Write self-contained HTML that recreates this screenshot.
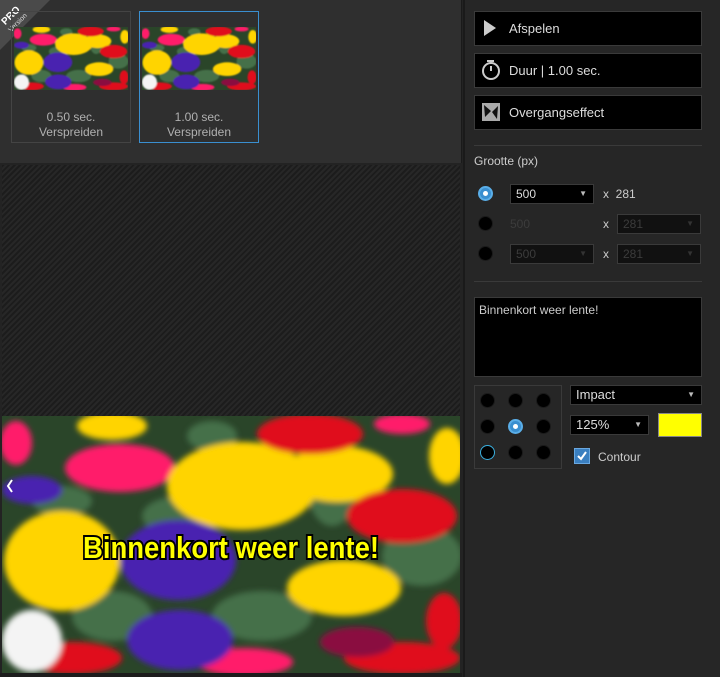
<!DOCTYPE html>
<html><head><meta charset="utf-8"><style>
*{margin:0;padding:0;box-sizing:border-box}
body{width:720px;height:677px;background:#232323;font-family:"Liberation Sans",sans-serif;position:relative;overflow:hidden;color:#ccc}
.abs{position:absolute}
.top{left:0;top:0;width:462px;height:163px;background:#2f2f2f;border-right:1px solid #1a1a1a}
.stripes{left:2px;top:165px;width:458px;height:251px;background:repeating-linear-gradient(135deg,#1c1c1c 0 2px,#272727 2px 4px)}
.thumb{top:11px;width:120px;height:132px;border:1px solid #444;text-align:center;font-size:12px;color:#b0b0b0;line-height:15px}
.thumb svg{position:absolute;left:2px;top:15px;width:114px;height:63px}
.thumb .t{position:absolute;left:0;right:0;top:98px}
.right{left:463px;top:0;width:257px;height:677px;background:#262626;border-left:2px solid #1a1a1a}
.btn{left:474px;width:228px;height:35px;background:#000;border:1px solid #3a3a3a;font-size:13px;color:#ddd;line-height:33px;padding-left:34px}
.sep{left:474px;width:228px;height:1px;background:#3a3a3a}
.rad{width:15px;height:15px;border-radius:50%;background:#000;border:1px solid #1a1a1a}
.sel{background:#000;border:1px solid #3a3a3a;font-size:12px;color:#ddd;line-height:18px;padding-left:5px}
.sel.dis{color:#3c3c3c;background:#111}
.arr{position:absolute;right:6px;top:0;font-size:8px;color:#bbb}
.dis .arr{color:#333}
.lbl{font-size:12px;color:#ccc}
</style></head><body>
<svg width="0" height="0" style="position:absolute">
<defs>
<filter id="bl"><feGaussianBlur stdDeviation="3"/></filter>
<symbol id="fl" viewBox="0 0 458 257" preserveAspectRatio="none">
<rect width="458" height="257" fill="#2a4529"/>
<g filter="url(#bl)">
<g fill="#45704a">
<ellipse cx="180" cy="100" rx="40" ry="20"/><ellipse cx="110" cy="200" rx="40" ry="25"/><ellipse cx="260" cy="200" rx="50" ry="25"/><ellipse cx="420" cy="140" rx="40" ry="30"/><ellipse cx="330" cy="70" rx="25" ry="40"/><ellipse cx="60" cy="85" rx="30" ry="15"/><ellipse cx="210" cy="20" rx="25" ry="15"/></g>
<g fill="#ff1f6a"><ellipse cx="14" cy="27" rx="16" ry="22"/><ellipse cx="118" cy="52" rx="55" ry="24"/><ellipse cx="400" cy="8" rx="28" ry="10"/><ellipse cx="243" cy="246" rx="48" ry="14"/></g>
<g fill="#ffd400"><ellipse cx="110" cy="10" rx="35" ry="14"/><ellipse cx="240" cy="70" rx="75" ry="44"/><ellipse cx="336" cy="58" rx="55" ry="28"/><ellipse cx="445" cy="40" rx="18" ry="28"/><ellipse cx="60" cy="145" rx="58" ry="50"/><ellipse cx="342" cy="172" rx="57" ry="28"/></g>
<g fill="#e0101c"><ellipse cx="308" cy="18" rx="53" ry="20"/><ellipse cx="400" cy="100" rx="55" ry="27"/><ellipse cx="70" cy="242" rx="50" ry="16"/><ellipse cx="400" cy="242" rx="58" ry="16"/><ellipse cx="442" cy="205" rx="18" ry="28"/></g>
<g fill="#4a22b0"><ellipse cx="30" cy="74" rx="30" ry="14"/><ellipse cx="176" cy="144" rx="58" ry="40"/><ellipse cx="178" cy="224" rx="53" ry="30"/></g>
<ellipse cx="30" cy="225" rx="30" ry="31" fill="#f4f4f4"/>
<ellipse cx="355" cy="226" rx="37" ry="15" fill="#8a1040"/>
</g>
</symbol>
</defs></svg>

<div class="abs top"></div>
<div class="abs" style="left:0;top:0;width:0;height:0;border-top:50px solid #4a4a4a;border-right:50px solid transparent"></div>
<div class="abs" style="left:3px;top:10px;transform:rotate(-45deg);font-size:10px;font-weight:bold;color:#fff;line-height:9px;text-align:center">PRO<br><span style="font-size:7px;font-weight:normal;color:#ddd">Version</span></div>
<div class="abs thumb" style="left:11px"><svg><use href="#fl"/></svg><div class="t">0.50 sec.<br>Verspreiden</div></div>
<div class="abs thumb" style="left:139px;border-color:#3a8fd0"><svg><use href="#fl"/></svg><div class="t">1.00 sec.<br>Verspreiden</div></div>
<div class="abs stripes"></div>
<svg class="abs" style="left:2px;top:416px" width="458" height="257"><use href="#fl"/>
<text x="229" y="142" text-anchor="middle" font-family="Liberation Sans Narrow, Liberation Sans, sans-serif" font-weight="bold" font-size="31" fill="#ffff00" stroke="#000" stroke-width="4" paint-order="stroke" textLength="296" lengthAdjust="spacingAndGlyphs">Binnenkort weer lente!</text>
<path d="M10 64 L6 70 L10 76" stroke="#fff" stroke-width="2" fill="none"/></svg>
<div class="abs" style="left:0;top:673px;width:462px;height:4px;background:#1c1c1c"></div>

<div class="abs right"></div>
<div class="abs btn" style="top:11px">Afspelen</div>
<svg class="abs" style="left:483px;top:19px" width="14" height="18"><path d="M1 1 L13 9 L1 17Z" fill="#ccc"/></svg>
<div class="abs btn" style="top:53px">Duur | 1.00 sec.</div>
<svg class="abs" style="left:481px;top:59px" width="20" height="22"><rect x="6" y="1" width="7" height="2" fill="#ccc"/><circle cx="10" cy="12" r="8" stroke="#ccc" stroke-width="2" fill="none"/><path d="M10 12 V7" stroke="#ccc" stroke-width="2"/></svg>
<div class="abs btn" style="top:95px">Overgangseffect</div>
<svg class="abs" style="left:482px;top:103px" width="18" height="18"><rect width="18" height="18" fill="#aaa"/><path d="M2 2 L9 8 L3 14Z M16 3 L10 9 L15 16Z" fill="#111"/></svg>
<div class="abs sep" style="top:145px"></div>
<div class="abs lbl" style="left:474px;top:154px">Grootte (px)</div>
<div class="abs rad" style="left:478px;top:186px;background:#3a8fd0;border:2px solid #5aaee8"><div style="position:absolute;left:3px;top:3px;width:5px;height:5px;border-radius:50%;background:#fff"></div></div>
<div class="abs sel" style="left:510px;top:184px;width:84px;height:20px">500<span class="arr">▼</span></div>
<div class="abs lbl" style="left:603px;top:187px">x&nbsp; 281</div>
<div class="abs rad" style="left:478px;top:216px"></div>
<div class="abs lbl" style="left:510px;top:217px;color:#3c3c3c">500</div>
<div class="abs lbl" style="left:603px;top:217px">x</div>
<div class="abs sel dis" style="left:617px;top:214px;width:84px;height:20px">281<span class="arr">▼</span></div>
<div class="abs rad" style="left:478px;top:246px"></div>
<div class="abs sel dis" style="left:510px;top:244px;width:84px;height:20px">500<span class="arr">▼</span></div>
<div class="abs lbl" style="left:603px;top:247px">x</div>
<div class="abs sel dis" style="left:617px;top:244px;width:84px;height:20px">281<span class="arr">▼</span></div>
<div class="abs sep" style="top:281px"></div>
<div class="abs" style="left:474px;top:297px;width:228px;height:80px;background:#000;border:1px solid #3a3a3a;font-size:12px;color:#ccc;padding:5px 4px">Binnenkort weer lente!</div>
<div class="abs" style="left:474px;top:385px;width:88px;height:84px;border:1px solid #3a3a3a"></div>
<div class="abs rad" style="left:480px;top:393px"></div><div class="abs rad" style="left:508px;top:393px"></div><div class="abs rad" style="left:536px;top:393px"></div>
<div class="abs rad" style="left:480px;top:419px"></div>
<div class="abs rad" style="left:508px;top:419px;background:#3a8fd0;border:2px solid #5aaee8"><div style="position:absolute;left:3px;top:3px;width:5px;height:5px;border-radius:50%;background:#fff"></div></div>
<div class="abs rad" style="left:536px;top:419px"></div>
<div class="abs rad" style="left:480px;top:445px;border:1.5px solid #3ab0e0"></div><div class="abs rad" style="left:508px;top:445px"></div><div class="abs rad" style="left:536px;top:445px"></div>
<div class="abs sel" style="left:570px;top:385px;width:132px;height:20px;font-size:13px">Impact<span class="arr">▼</span></div>
<div class="abs sel" style="left:570px;top:415px;width:79px;height:20px;font-size:13px">125%<span class="arr">▼</span></div>
<div class="abs" style="left:658px;top:413px;width:44px;height:24px;background:#ffff00;border:1px solid #888"></div>
<div class="abs" style="left:574px;top:448px;width:16px;height:16px;background:#3a7fc0;border:1px solid #6aa8e0"></div>
<svg class="abs" style="left:576px;top:450px" width="12" height="12"><path d="M2 6 L5 9 L10 2" stroke="#fff" stroke-width="2" fill="none"/></svg>
<div class="abs lbl" style="left:598px;top:450px">Contour</div>
</body></html>
